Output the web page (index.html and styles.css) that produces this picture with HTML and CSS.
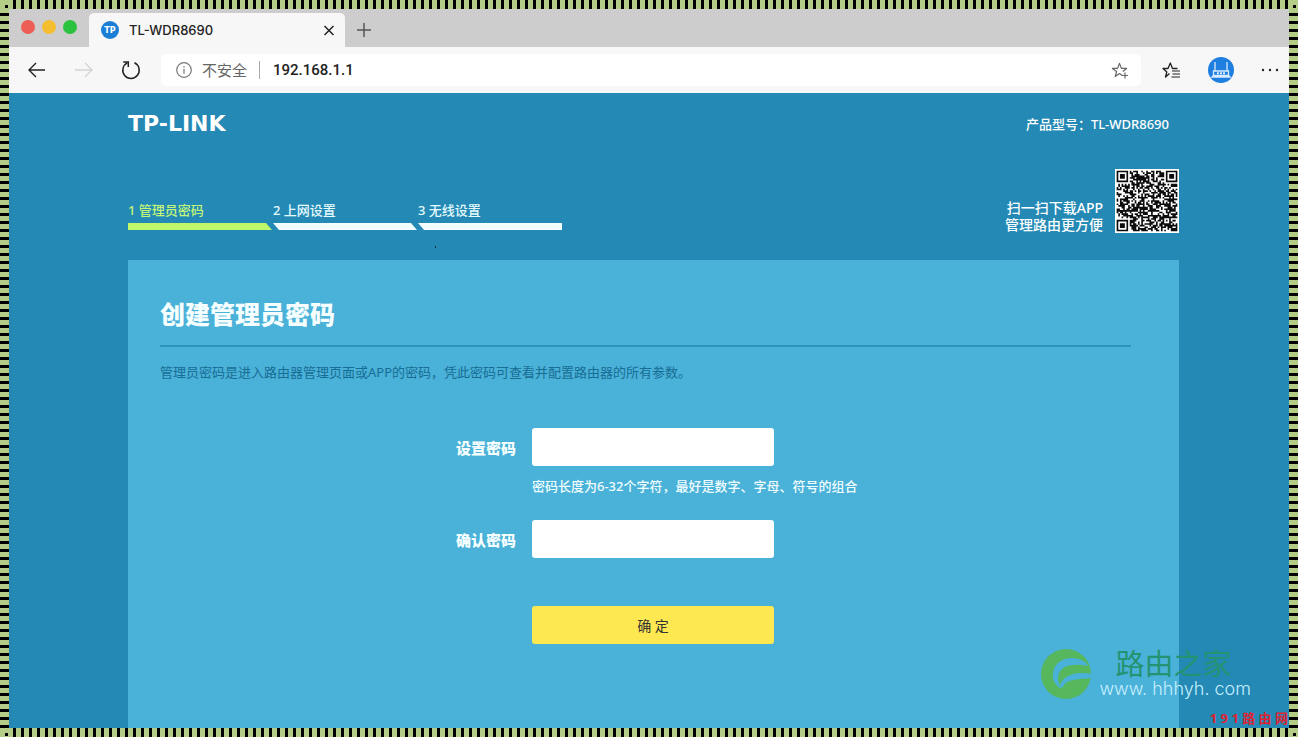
FILE: index.html
```html
<!DOCTYPE html>
<html lang="zh-CN">
<head>
<meta charset="utf-8">
<title>TL-WDR8690</title>
<link rel="stylesheet" href="styles.css">
</head>
<body>
<div class="browser">
  <div class="tabstrip">
    <div class="lights"><i class="light red"></i><i class="light amber"></i><i class="light green"></i></div>
    <div class="tab">
      <svg class="favicon" width="18" height="18" viewBox="0 0 18 18"><circle cx="9" cy="9" r="9" fill="#1b7fd6"/><text class="favicon-text" x="9" y="12" text-anchor="middle">TP</text></svg>
      <span class="tab-title">TL-WDR8690</span>
      <button class="icon-btn" aria-label="关闭标签页"><svg width="12" height="12" viewBox="0 0 12 12" fill="none" stroke="#222" stroke-width="1.5"><path d="M1.500 2l9 9M10.500 2l-9 9"/></svg></button>
    </div>
    <button class="icon-btn newtab" aria-label="新建标签页"><svg width="16" height="16" viewBox="0 0 16 16" fill="none" stroke="#555" stroke-width="1.500"><path d="M8 1v14M1 8h14"/></svg></button>
  </div>
  <div class="toolbar">
    <button class="icon-btn" aria-label="后退"><svg width="20" height="20" viewBox="0 0 20 20" fill="none" stroke="#222" stroke-width="1.400"><path d="M18 10H2M9 3l-7 7 7 7"/></svg></button>
    <button class="icon-btn" aria-label="前进"><svg width="20" height="20" viewBox="0 0 20 20" fill="none" stroke="#d4d4d4" stroke-width="1.400"><path d="M1 10h17M11 3l7 7-7 7"/></svg></button>
    <button class="icon-btn" aria-label="刷新"><svg width="20" height="20" viewBox="0 0 20 20" fill="none" stroke="#222" stroke-width="1.500"><path d="M13.500 2.800A8.200 8.200 0 1 1 6.300 2.900"/><path d="M2.300 2h5v5"/></svg></button>
    <div class="address">
      <svg width="16" height="16" viewBox="0 0 16 16" fill="none" stroke="#777" stroke-width="1.200"><circle cx="8" cy="8" r="7.300"/><path d="M8 6.800v5M8 4v1.400"/></svg>
      <span class="insecure">不安全</span>
      <input class="url" aria-label="地址" value="192.168.1.1">
      <button class="icon-btn" aria-label="收藏"><svg width="18" height="18" viewBox="0 0 18 18" fill="none" stroke="#666" stroke-width="1.200" stroke-linejoin="round"><path d="M11.300 14.400L8.500 12.500 4.200 15.600 5.600 10.500 1.400 7.400h5.200L8.500 2.400l1.900 5h5.200l-3.900 3"/><path d="M14 11.500v6M11 14.500h6"/></svg></button>
    </div>
    <button class="icon-btn" aria-label="收藏夹"><svg width="20" height="20" viewBox="0 0 20 20" fill="none" stroke="#222" stroke-width="1.300" stroke-linejoin="round"><path d="M8.500 13.500L4.500 17 5.800 12 2 8.500h5L9.300 3l2.200 5.500h5"/><path d="M11 11h8M11.500 14h7.500M10.500 17h8.500" stroke-width="1"/></svg></button>
    <button class="icon-btn" aria-label="用户"><svg width="26" height="26" viewBox="0 0 26 26"><circle cx="13" cy="13" r="13" fill="#1f7fe0"/><g fill="none" stroke="#d8ecff" stroke-width="1.300"><path d="M7 5v9M19 5v9M5.500 14h15v4.500h-15zM5.500 18.500L4 20h18l-1.500-1.500"/><path d="M9 16.200h8" stroke-width="2" stroke-dasharray="2 1"/></g></svg></button>
    <button class="icon-btn" aria-label="更多"><svg width="18" height="4" viewBox="0 0 18 4" fill="#222"><circle cx="2" cy="2" r="1.200"/><circle cx="9" cy="2" r="1.200"/><circle cx="16" cy="2" r="1.200"/></svg></button>
  </div>
  <div class="page">
    <header class="header">
      <div class="logo">TP-LINK</div>
      <div class="model">产品型号：TL-WDR8690</div>
    </header>
    <div class="intro">
      <ol class="steps">
        <li class="step active">1 管理员密码</li>
        <li class="step">2 上网设置</li>
        <li class="step">3 无线设置</li>
      </ol>
      <div class="download">
        <p class="download-text">扫一扫下载APP<br>管理路由更方便</p>
        <svg class="qr" width="64" height="64" viewBox="-1 -1 39 39"><path fill="#fff" d="M-1-1h39v39H-1z"/><path id="qr" fill="#0c0c0c"/></svg>
      </div>
      <i class="speck"></i>
    </div>
    <main class="panel">
      <h1 class="title">创建管理员密码</h1>
      <p class="desc">管理员密码是进入路由器管理页面或APP的密码，凭此密码可查看并配置路由器的所有参数。</p>
      <form class="form">
        <label class="label" for="pw">设置密码</label>
        <input class="field" id="pw" type="password">
        <p class="hint">密码长度为6-32个字符，最好是数字、字母、符号的组合</p>
        <label class="label" for="pw2">确认密码</label>
        <input class="field" id="pw2" type="password">
        <button class="submit" type="button">确 定</button>
      </form>
    </main>
    <div class="watermark">
      <svg width="52" height="50" viewBox="0 0 52 50"><circle cx="25" cy="25" r="25" fill="#56b75c"/><path d="M46 15C37 6 18 7 13 20c-3 9 0 15 6 19l-2-9C17 20 25 13 47 17z" fill="#4ab1d8"/><path d="M52 25c-16-3-31 0-34 14l4-1c2-7 12-8 30-9z" fill="#4ab1d8"/></svg>
      <div class="mark-text"><span class="mark-name">路由之家</span><span class="mark-url">www. hhhyh. com</span></div>
    </div>
    <div class="credit">1 9 1 路 由 网</div>
  </div>
</div>
<script src="qr.js"></script>
</body>
</html>
```
FILE: styles.css
```css
* { box-sizing: border-box; }

body {
  margin: 0;
  padding: 9px;
  min-height: 100vh;
  display: flex;
  font-family: "Noto Sans", "Noto Sans CJK SC", sans-serif;
  background:
    linear-gradient(#000, #000) left 5px top 5px / 3px 3px no-repeat,
    linear-gradient(#000, #000) right 2px top 5px / 3px 3px no-repeat,
    linear-gradient(#000, #000) left 5px bottom 1px / 3px 3px no-repeat,
    linear-gradient(#000, #000) right 2px bottom 1px / 3px 3px no-repeat,
    linear-gradient(#b3cc86, #b3cc86) left top / 12px 9px no-repeat,
    linear-gradient(#b3cc86, #b3cc86) right top / 9px 9px no-repeat,
    linear-gradient(#b3cc86, #b3cc86) left bottom / 12px 9px no-repeat,
    linear-gradient(#b3cc86, #b3cc86) right bottom / 9px 9px no-repeat,
    repeating-linear-gradient(90deg, #b3cc86 0 5px, #000 5px 8px) left top / 100% 9px no-repeat,
    repeating-linear-gradient(90deg, #b3cc86 0 5px, #000 5px 8px) left bottom / 100% 9px no-repeat,
    repeating-linear-gradient(#b3cc86 0 5px, #000 5px 8px);
}

.browser { flex: 1; min-width: 0; display: flex; flex-direction: column; }
.icon-btn { display: flex; padding: 0; border: 0; background: none; }

.tabstrip {
  display: flex;
  height: 38px;
  padding-top: 4px;
  background: #cdcdcd;
}
.lights { display: flex; gap: 7px; width: 80px; padding: 7px 0 0 12px; }
.light { width: 14px; height: 14px; border-radius: 50%; }
.red { background: #ed5e57; }
.amber { background: #f5bd30; }
.green { background: #2ac23f; }
.tab {
  display: flex;
  align-items: center;
  gap: 10px;
  width: 256px;
  padding: 0 10px 0 12px;
  background: #f7f7f7;
  border-radius: 5px 5px 0 0;
}
.tab-title { flex: 1; font: 500 13px Inter, sans-serif; color: #222; }
.favicon-text { font: bold 8px "DejaVu Sans", sans-serif; fill: #fff; }
.newtab { padding: 9px 11px; }

.toolbar {
  display: flex;
  align-items: center;
  height: 46px;
  padding: 0 10px 0 18px;
  gap: 27px;
  background: #f7f7f7;
}
.address {
  flex: 1;
  display: flex;
  align-items: center;
  gap: 10px;
  height: 32px;
  margin: 0 -7px 0 -7px;
  padding: 0 12px 0 15px;
  background: #fff;
  border-radius: 5px;
}
.insecure {
  padding-right: 12px;
  border-right: 1px solid #aaa;
  font-size: 15px;
  line-height: 18px;
  color: #666;
}
.url {
  flex: 1;
  min-width: 0;
  border: 0;
  padding: 0 3px;
  font: 500 15px Roboto, sans-serif;
  color: #222;
}

.page {
  position: relative;
  flex: 1;
  display: flex;
  flex-direction: column;
  padding: 0 110px 0 119px;
  background: #2489b4;
}
.header {
  display: flex;
  justify-content: space-between;
  align-items: center;
  height: 60px;
  padding-right: 10px;
  color: #fff;
}
.logo { font: bold 22px "DejaVu Sans", sans-serif; }
.model { font-size: 13px; font-weight: 500; }
.intro {
  position: relative;
  display: flex;
  justify-content: space-between;
  align-items: flex-end;
  height: 80px;
  margin-bottom: 27px;
  color: #fff;
}
.steps { display: flex; gap: 1px; margin: 0; padding: 0 0 3px; list-style: none; }
.step { width: 144px; font-size: 13px; font-weight: 500; line-height: 18px; color: #e4fbff; }
.step::after {
  content: "";
  display: block;
  height: 7px;
  margin-top: 4px;
  background: #f2feff;
  clip-path: polygon(0 0, 138px 0, 100% 100%, 6px 100%);
}
.step:first-child::after { clip-path: polygon(0 0, 138px 0, 100% 100%, 0 100%); }
.step:last-child::after { clip-path: polygon(0 0, 100% 0, 100% 100%, 6px 100%); }
.active { color: #c3f578; }
.active::after { background: #c0f76a; }
.download { display: flex; align-items: flex-end; gap: 12px; }
.download-text { margin: 0; font-size: 14px; font-weight: 500; line-height: 17px; text-align: right; }
.speck { position: absolute; left: 307px; bottom: -15px; width: 1px; height: 2px; background: #0b2c3c; }

.panel { flex: 1; padding: 36px 48px 84px 32px; background: #4ab1d8; }
.title {
  margin: 0;
  padding-bottom: 13px;
  border-bottom: 2px solid #2c92bd;
  font-size: 25px;
  line-height: 36px;
  font-weight: 900;
  color: #f6ffff;
}
.desc { margin: 15px 0 46px; font-size: 13px; line-height: 20px; color: #176d94; }
.form {
  display: grid;
  grid-template-columns: minmax(80px, 356px) 1fr;
  column-gap: 16px;
  align-items: center;
}
.label { justify-self: end; font-size: 15px; font-weight: 900; color: #f6ffff; }
.field { width: 242px; height: 38px; border: 0; border-radius: 3px; padding: 0 10px; background: #fff; }
.hint { grid-column: 2; margin: 10px 0 24px; font-size: 13px; font-weight: 500; line-height: 20px; color: #f0fdff; }
.submit {
  grid-column: 2;
  width: 242px;
  height: 38px;
  margin-top: 48px;
  border: 0;
  border-radius: 3px;
  background: #fee852;
  font: 14px "Noto Sans", "Noto Sans CJK SC", sans-serif;
  color: #333;
}

.watermark { position: absolute; right: 38px; bottom: 29px; display: flex; align-items: center; gap: 6px; }
.mark-text { display: flex; flex-direction: column; gap: 2px; }
.mark-name { padding-left: 16px; font-size: 29px; line-height: 28px; font-weight: 400; color: #249372; }
.mark-url { font: 300 18px/18px Inter, sans-serif; color: #c4efff; }
.credit { position: absolute; right: 1px; bottom: 0; font: bold 13px/20px "Noto Sans", "Noto Sans CJK SC", sans-serif; color: #dc2433; }
```
FILE: qr.js
```js
// Fills the 37x37 download code: three finder squares, one alignment square, data modules.
const N = 37;
let seed = 8690;
const next = () => (seed = (seed * 1103515245 + 12345) % 2147483648) / 2147483648;
const ring = (dx, dy) => Math.max(Math.abs(dx), Math.abs(dy));
const dark = (x, y) => {
  const random = next() < 0.6;
  for (const [cx, cy] of [[3, 3], [N - 4, 3], [3, N - 4]]) {
    const r = ring(x - cx, y - cy);
    if (r <= 4) return r === 3 || r <= 1;
  }
  const a = ring(x - 30, y - 30);
  if (a <= 2) return a !== 1;
  return random;
};
let d = "";
for (let y = 0; y < N; y++)
  for (let x = 0; x < N; x++)
    if (dark(x, y)) d += `M${x} ${y}h1v1h-1z`;
document.getElementById("qr").setAttribute("d", d);
```
